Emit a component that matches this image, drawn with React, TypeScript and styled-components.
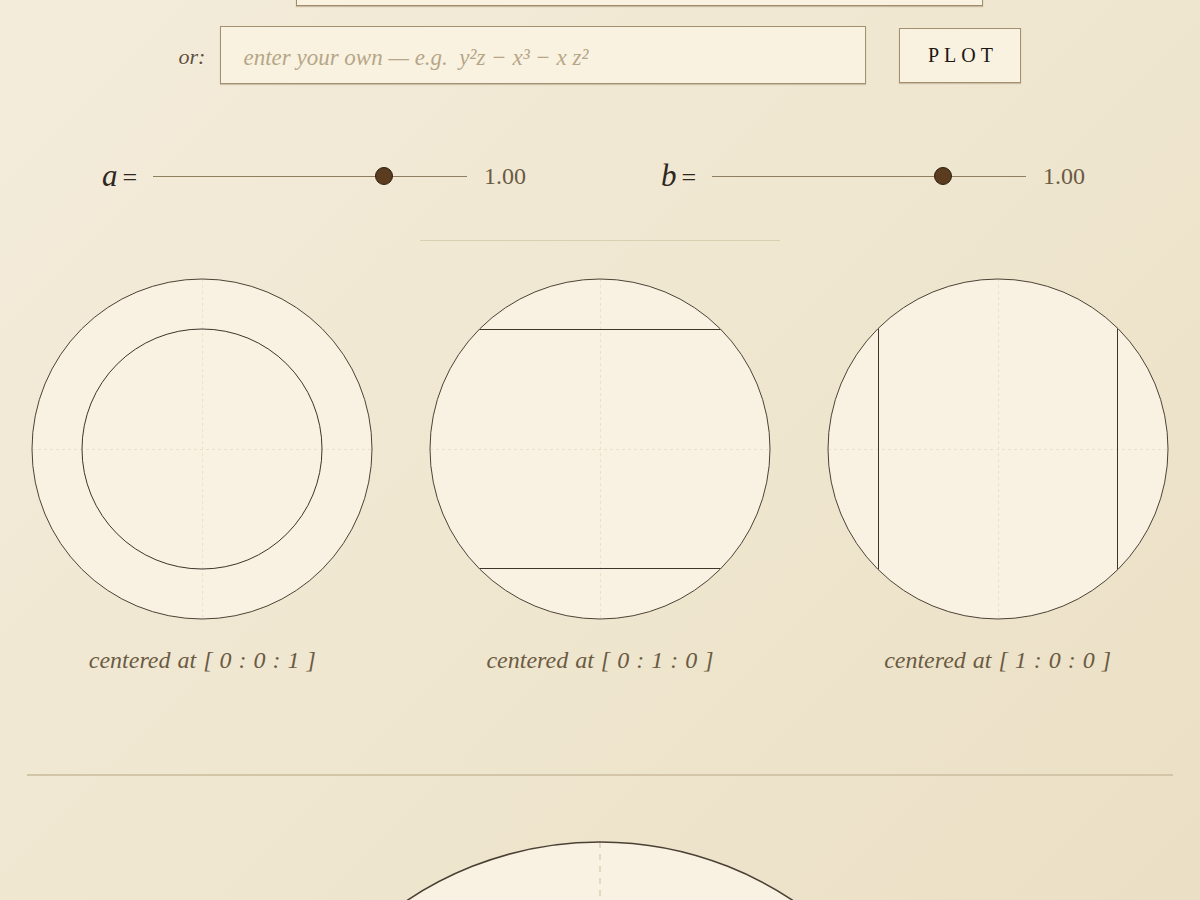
import { createGlobalStyle } from 'styled-components';
import styled from 'styled-components';

const GlobalStyle = createGlobalStyle`
  html, body {
    margin: 0;
    height: 100%;
    overflow: hidden;
  }
  body {
    background: linear-gradient(135deg, #f4ecdb 0%, #efe6cf 55%, #ebe0c5 100%);
    font-family: 'Liberation Serif', 'Times New Roman', serif;
    color: #3a3026;
  }
`;

const Page = styled.div`
  width: 1200px;
  height: 900px;
  overflow: hidden;
  display: flex;
  flex-direction: column;
  align-items: center;
`;

const SelectRow = styled.div`
  margin-top: -46px;
  display: flex;
  align-items: center;
  padding-left: 79px;
`;

const FieldLabel = styled.label`
  font-style: italic;
  font-size: 22px;
  color: #5e4f3a;
  padding-top: 3px;
  text-shadow: 0 1px 0 rgba(255, 255, 255, 0.5);
`;

const CurveSelect = styled.select`
  width: 687px;
  height: 52px;
  appearance: none;
  background: #f9f2e1;
  border: 1px solid #a08c6a;
  box-shadow: 0 1px 1px rgba(120, 100, 70, 0.35);
  font-family: inherit;
  font-size: 22px;
  padding: 0 20px;
  color: #3a3026;
`;

const InputRow = styled.div`
  margin-top: 20px;
  display: flex;
  align-items: center;
`;

const EquationInput = styled.input`
  margin-left: 15px;
  width: 646px;
  height: 58px;
  box-sizing: border-box;
  background: #f9f2e1;
  border: 1px solid #a39070;
  box-shadow: 0 1px 1px rgba(120, 100, 70, 0.3);
  padding: 6px 22px 0;
  font-family: inherit;
  font-style: italic;
  font-size: 23px;
  color: #3a3026;
  outline: none;

  &::placeholder {
    color: #b6a687;
  }
`;

const PlotButton = styled.button`
  margin-left: 33px;
  width: 122px;
  height: 55px;
  background: #f9f2e1;
  border: 1px solid #a39070;
  box-shadow: 0 1px 1px rgba(120, 100, 70, 0.3);
  font-family: inherit;
  font-size: 20px;
  letter-spacing: 5px;
  padding: 0 0 0 5px;
  color: #1c1712;
  cursor: pointer;
`;

const SliderRow = styled.div`
  align-self: stretch;
  margin-top: 74px;
  height: 40px;
  display: flex;
  align-items: center;
  gap: 135px;
  padding-left: 102px;
`;

const SliderGroup = styled.div`
  display: flex;
  align-items: center;
`;

const ParamLabel = styled.span`
  width: 38px;
  margin-right: 13px;
  font-size: 26px;
  color: #2e271f;
  white-space: nowrap;

  i {
    font-size: 31px;
    margin-right: 5px;
  }
`;

const Range = styled.input`
  appearance: none;
  -webkit-appearance: none;
  width: 314px;
  height: 20px;
  margin: 0;
  background: transparent;

  &::-webkit-slider-runnable-track {
    height: 1px;
    background: #8f7e60;
  }

  &::-webkit-slider-thumb {
    -webkit-appearance: none;
    width: 18px;
    height: 18px;
    margin-top: -8.5px;
    border-radius: 50%;
    box-sizing: border-box;
    background: #5b3c1f;
    border: 1.5px solid #2c1f12;
  }
`;

const ParamValue = styled.span`
  margin-left: 17px;
  font-size: 24px;
  color: #6a5a44;
`;

const ShortRule = styled.hr`
  width: 360px;
  margin: 46px 0 0;
  border: none;
  border-top: 1px solid #dbcfb3;
`;

const ChartGrid = styled.div`
  margin-top: 37px;
  width: 1146px;
  display: grid;
  grid-template-columns: repeat(3, 1fr);
  column-gap: 47px;
`;

const Chart = styled.figure`
  margin: 0;
  display: flex;
  flex-direction: column;
  align-items: center;
`;

const Caption = styled.figcaption`
  margin-top: 25px;
  line-height: 30px;
  font-style: italic;
  font-size: 24px;
  color: #6b5b43;
  word-spacing: 1px;
`;

const LongRule = styled.hr`
  width: 1146px;
  margin: 99px 0 0;
  border: none;
  border-top: 2px solid #d3c6a8;
`;

const BigChart = styled.svg`
  margin-top: 64px;
  flex-shrink: 0;
`;

type Curve =
  | { kind: 'circle'; r: number }
  | { kind: 'hlines'; y: number }
  | { kind: 'vlines'; x: number };

const R = 170;
const SIZE = 342;
const C = SIZE / 2;

const charts: { caption: string; curve: Curve }[] = [
  { caption: 'centered at [ 0 : 0 : 1 ]', curve: { kind: 'circle', r: 120 } },
  { caption: 'centered at [ 0 : 1 : 0 ]', curve: { kind: 'hlines', y: 120 } },
  { caption: 'centered at [ 1 : 0 : 0 ]', curve: { kind: 'vlines', x: 120 } },
];

function CurvePath({ curve }: { curve: Curve }) {
  const stroke = '#3e342a';
  if (curve.kind === 'circle') {
    return <circle cx={C} cy={C} r={curve.r} fill="none" stroke={stroke} strokeWidth={1} />;
  }
  if (curve.kind === 'hlines') {
    const half = Math.sqrt(R * R - curve.y * curve.y);
    return (
      <g stroke={stroke} strokeWidth={1}>
        <line x1={C - half} x2={C + half} y1={C - curve.y + 0.5} y2={C - curve.y + 0.5} />
        <line x1={C - half} x2={C + half} y1={C + curve.y - 0.5} y2={C + curve.y - 0.5} />
      </g>
    );
  }
  const half = Math.sqrt(R * R - curve.x * curve.x);
  return (
    <g stroke={stroke} strokeWidth={1}>
      <line y1={C - half} y2={C + half} x1={C - curve.x + 0.5} x2={C - curve.x + 0.5} />
      <line y1={C - half} y2={C + half} x1={C + curve.x - 0.5} x2={C + curve.x - 0.5} />
    </g>
  );
}

function Disc({ curve }: { curve: Curve }) {
  return (
    <svg width={SIZE} height={SIZE} viewBox={`0 0 ${SIZE} ${SIZE}`}>
      <circle cx={C} cy={C} r={R} fill="#f9f2e2" />
      <g stroke="#ebe1cb" strokeWidth={1} strokeDasharray="3 3">
        <line x1={C - R} x2={C + R} y1={C + 0.5} y2={C + 0.5} />
        <line y1={C - R} y2={C + R} x1={C + 0.5} x2={C + 0.5} />
      </g>
      <CurvePath curve={curve} />
      <circle cx={C} cy={C} r={R} fill="none" stroke="#4d4235" strokeWidth={1} />
    </svg>
  );
}

export default function App() {
  const BIG = 700;
  const BR = 347;
  return (
    <>
      <GlobalStyle />
      <Page>
        <SelectRow>
          <CurveSelect defaultValue="weierstrass" aria-label="curve">
            <option value="weierstrass">y²z = x³ + a x z² + b z³</option>
          </CurveSelect>
        </SelectRow>

        <InputRow>
          <FieldLabel>or:</FieldLabel>
          <EquationInput placeholder="enter your own — e.g.  y²z − x³ − x z²" />
          <PlotButton>PLOT</PlotButton>
        </InputRow>

        <SliderRow>
          <SliderGroup>
            <ParamLabel><i>a</i>=</ParamLabel>
            <Range type="range" min={-2} max={2} step={0.01} defaultValue={1} />
            <ParamValue>1.00</ParamValue>
          </SliderGroup>
          <SliderGroup>
            <ParamLabel><i>b</i>=</ParamLabel>
            <Range type="range" min={-2} max={2} step={0.01} defaultValue={1} />
            <ParamValue>1.00</ParamValue>
          </SliderGroup>
        </SliderRow>

        <ShortRule />

        <ChartGrid>
          {charts.map((c) => (
            <Chart key={c.caption}>
              <Disc curve={c.curve} />
              <Caption>{c.caption}</Caption>
            </Chart>
          ))}
        </ChartGrid>

        <LongRule />

        <BigChart width={BIG} height={BIG} viewBox={`0 0 ${BIG} ${BIG}`}>
          <circle cx={BIG / 2} cy={BR + 2} r={BR} fill="#f9f2e2" />
          <line
            x1={BIG / 2}
            x2={BIG / 2}
            y1={2}
            y2={BR * 2 + 2}
            stroke="#ddd1b5"
            strokeWidth={1.5}
            strokeDasharray="6 6"
          />
          <circle cx={BIG / 2} cy={BR + 2} r={BR} fill="none" stroke="#4a4034" strokeWidth={1.6} />
        </BigChart>
      </Page>
    </>
  );
}
